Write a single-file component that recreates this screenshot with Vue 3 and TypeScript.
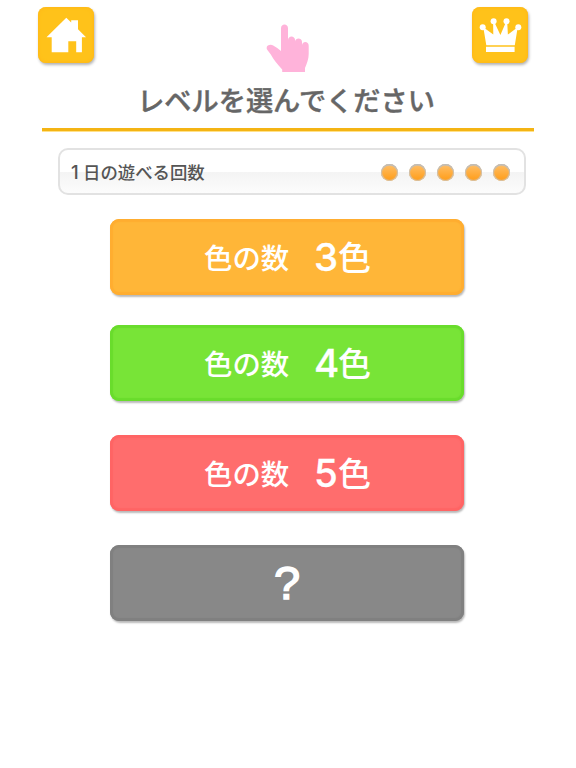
<script setup lang="ts">
interface Level {
  id: string
  count: number | null
}

const levels: Level[] = [
  { id: 'orange', count: 3 },
  { id: 'green', count: 4 },
  { id: 'red', count: 5 },
  { id: 'locked', count: null },
]
const playsLeft = 5
</script>

<template>
  <main class="screen">
    <header class="top">
      <button class="icon-button" aria-label="ホーム">
        <svg viewBox="0 0 56 56">
          <path d="M28.3 10.8 33.2 15.6V13.2H40V22.3L48 30.3H43.9V45.3H38.2V34.3H30.3V45.3H13.7V30.3H8.5Z" />
        </svg>
      </button>
      <svg class="hand" viewBox="0 0 44 50">
        <path d="M15 27V5.2C15 .3 22 .3 22 5.2V17C22.2 12.3 28.8 12.3 29.1 17V18.5C29.5 14.4 35.7 14.4 36 18.8V22C36.7 17.8 42.7 18.2 42.7 22.8V31C42.7 36 41 40 39 45V49H16.2V46.5C11 41 8 37 4.8 31.5L1.4 27C-1.3 23.3 3.8 20.5 7.2 22.5C10 24 12.5 25.8 15 28Z" />
      </svg>
      <button class="icon-button" aria-label="ランキング">
        <svg viewBox="0 0 56 56">
          <circle cx="10.7" cy="20.2" r="3" />
          <circle cx="21.6" cy="14.2" r="3" />
          <circle cx="34.5" cy="14.2" r="3" />
          <circle cx="46.3" cy="20.2" r="3" />
          <path d="M11.5 21.5H13L21.3 27.5 21.1 15H22.3L28.4 28 34 15H35.2L35.9 27.5 44 21.5H45.5L42.8 38.2H14.3ZM14 39.7H42.6V44.9H14Z" />
        </svg>
      </button>
    </header>
    <h1 class="title">レベルを選んでください</h1>
    <section class="plays">
      <span class="plays-label"><span class="one">1</span>日の遊べる回数</span>
      <span class="dots"><i v-for="n in playsLeft" :key="n" class="dot"></i></span>
    </section>
    <nav class="levels">
      <button v-for="level in levels" :key="level.id" class="level" :class="level.id">
        <template v-if="level.count !== null">
          <span class="caption">色の数</span>
          <span class="digit">{{ level.count }}</span>
          <span class="unit">色</span>
        </template>
        <span v-else class="question">?</span>
      </button>
    </nav>
  </main>
</template>

<style>
body {
  margin: 0;
  background: #fff;
}
</style>

<style scoped>
.screen {
  box-sizing: border-box;
  width: 576px;
  height: 768px;
  overflow: hidden;
  background: #fff;
  font-family: "Noto Sans CJK JP", sans-serif;
}
button {
  padding: 0;
  border: 0;
  font-family: inherit;
}
.top {
  display: flex;
  justify-content: space-between;
  align-items: flex-start;
  height: 75px;
  padding: 7px 48px 0 38px;
  box-sizing: border-box;
}
.icon-button {
  width: 56px;
  height: 56px;
  border-radius: 8px;
  background: #ffc21a;
  box-shadow: inset 0 0 3px 1px #ffb918, 1px 2px 3px rgba(0, 0, 0, 0.3);
}
.icon-button svg {
  display: block;
  width: 56px;
  height: 56px;
  fill: #fff;
}
.hand {
  width: 44px;
  height: 50px;
  margin: 16px 0 0 9px;
  fill: #ffb3da;
}
.title {
  box-sizing: border-box;
  height: 56px;
  margin: 0 42px;
  padding-right: 4px;
  border-bottom: 3px solid #f4b414;
  box-shadow: 0 1px 0 #ffe18a;
  color: #666;
  font-size: 27.2px;
  line-height: 48px;
  font-weight: 500;
  -webkit-text-stroke: 0.4px #666;
  text-align: center;
  white-space: nowrap;
}
.plays {
  box-sizing: border-box;
  display: flex;
  align-items: center;
  justify-content: space-between;
  width: 468px;
  height: 47px;
  margin: 17px 0 0 58px;
  padding: 0 14px 0 11px;
  border: 2px solid #e2e2e2;
  border-radius: 10px;
  background: linear-gradient(#fff 0 51%, #f4f4f4 52%, #fcfcfc);
}
.plays-label {
  color: #555;
  font-size: 17.4px;
  font-weight: 500;
  line-height: 24px;
  white-space: nowrap;
}
.one {
  display: inline-block;
  width: 12px;
  font-family: Inter, sans-serif;
  font-size: 18.5px;
}
.dots {
  display: flex;
  gap: 11px;
  padding-top: 2px;
}
.dot {
  width: 17px;
  height: 17px;
  border-radius: 50%;
  background: linear-gradient(#ffc06a, #ff9c16);
  box-shadow: inset 0 1.5px 1px #bcbcbc, inset 0 0 1px 1px #d0c4b4;
}
.levels {
  display: flex;
  flex-direction: column;
  gap: 34px;
  width: 354px;
  margin: 24px 0 0 110px;
}
.level {
  display: flex;
  align-items: center;
  width: 354px;
  height: 76px;
  padding-left: 94px;
  border-radius: 9px;
  color: #fff;
  white-space: nowrap;
  background: var(--face);
  box-shadow: inset 0 0 1px 3px var(--edge), 1px 2px 2px rgba(0, 0, 0, 0.28);
}
.orange {
  --face: #ffb638;
  --edge: #ffad30;
  margin-bottom: -4px;
}
.green {
  --face: #78e437;
  --edge: #69dc2c;
}
.red {
  --face: #ff6d6d;
  --edge: #ff6464;
}
.locked {
  --face: #888;
  --edge: #808080;
  justify-content: center;
  padding-left: 0;
}
.caption {
  width: 110px;
  text-align: left;
  font-size: 28.4px;
  line-height: 74px;
  padding-bottom: 1px;
  font-weight: 500;
}
.digit {
  width: 24px;
  font-family: Inter, sans-serif;
  font-size: 38.5px;
  line-height: 76px;
  font-weight: 500;
  -webkit-text-stroke: 0.3px #fff;
}
.unit {
  font-size: 33px;
  line-height: 74px;
  padding-bottom: 2px;
  font-weight: 500;
}
.question {
  font-family: "Liberation Sans", sans-serif;
  font-size: 47px;
  line-height: 76px;
  font-weight: 400;
  -webkit-text-stroke: 1.5px #fff;
}
</style>
